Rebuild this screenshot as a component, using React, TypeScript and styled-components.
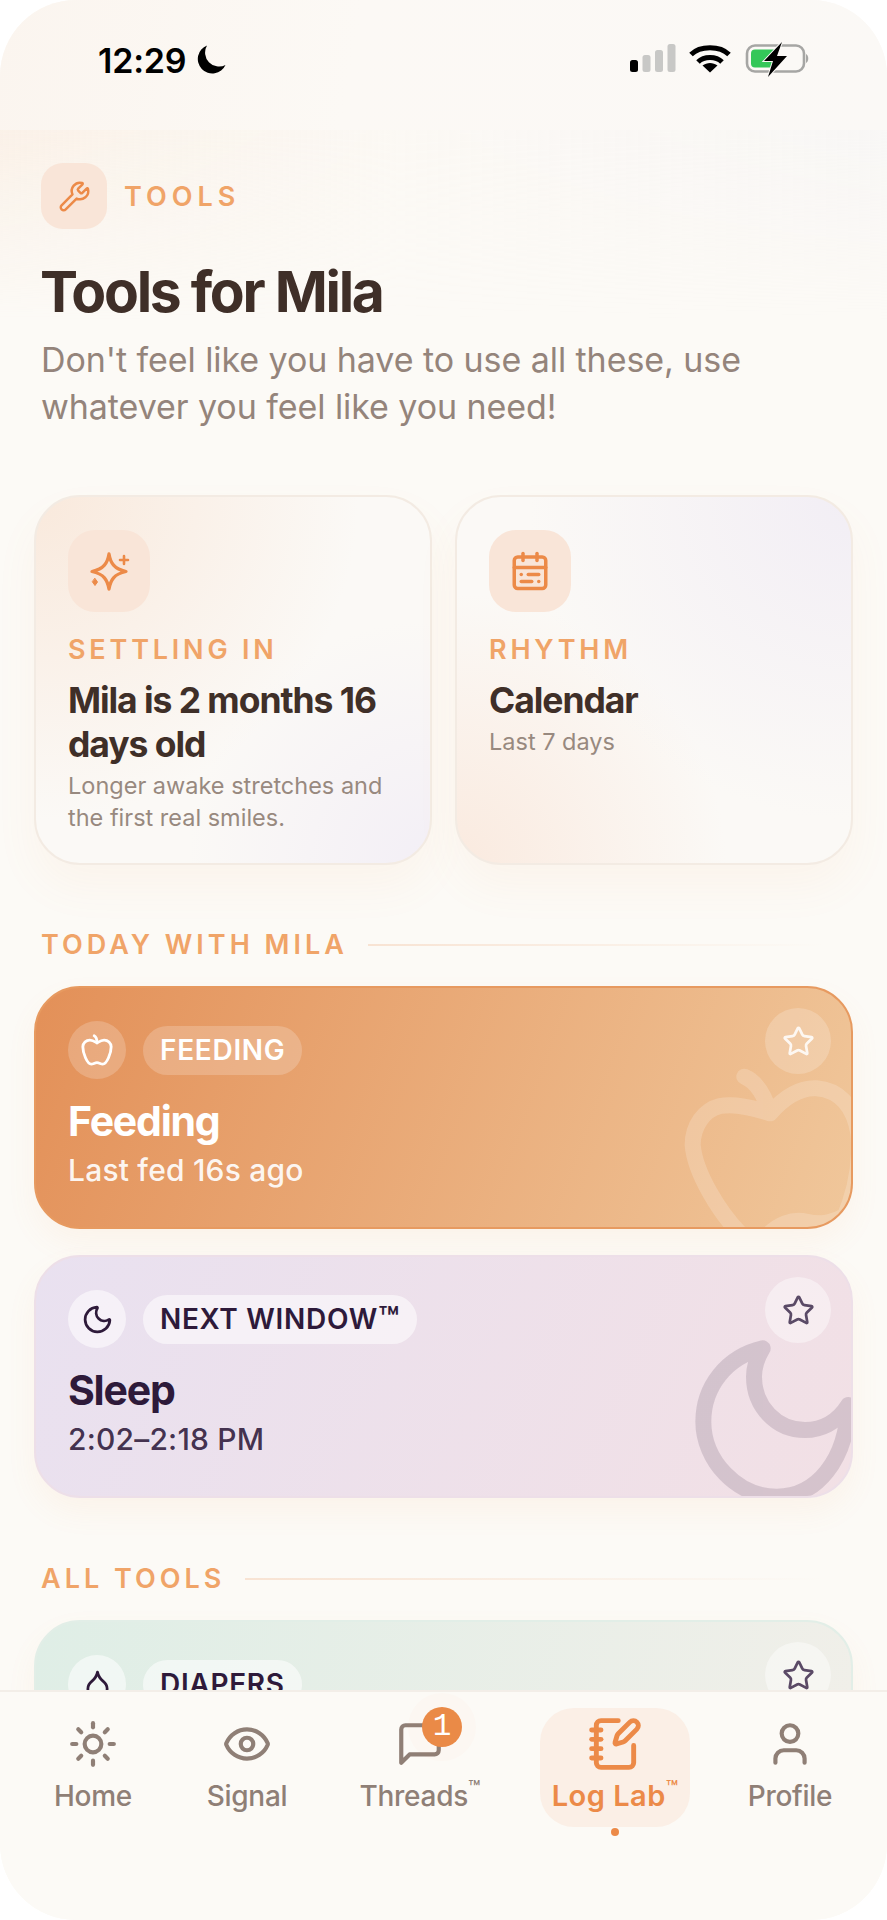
import React from "react";
import styled, { createGlobalStyle } from "styled-components";
import { Wrench, CalendarRange, Moon, Star, Droplet, Sun, Eye, NotebookPen, User } from "lucide-react";

const Global = createGlobalStyle`
  html, body { margin: 0; padding: 0; background: #fff; }
  * { box-sizing: border-box; }
  body { font-family: Inter, "Noto Sans", "Liberation Sans", sans-serif; }
`;

const Phone = styled.div`
  width: 887px; height: 1920px; border-radius: 76px; overflow: hidden;
  background: #fcfaf6; display: flex; flex-direction: column; position: relative;
`;
const StatusBar = styled.div`
  height: 130px; flex: none; padding: 41px 75px 0 98px; display: flex; justify-content: space-between; align-items: flex-start;
  background: linear-gradient(100deg, #fbf5ef, #fcf9f5 40%, #fbf9f6);
`;
const TimeWrap = styled.div`display: flex; align-items: center; gap: 10px; height: 38px;`;
const Time = styled.span`font-size: 34px; font-weight: 600; color: #000; letter-spacing: -0.2px;`;
const Main = styled.main`
  flex: 1; min-height: 0; overflow: hidden; position: relative; padding: 33px 34px 0;
  &::before {
    content: ""; position: absolute; left: 0; right: 0; top: 0; height: 190px; pointer-events: none;
    background: linear-gradient(90deg, rgba(248,225,205,.34), rgba(250,240,230,.08) 45%, rgba(240,238,245,.25));
    -webkit-mask-image: linear-gradient(to bottom, #000, transparent);
    mask-image: linear-gradient(to bottom, #000, transparent);
  }
`;
const Eyebrow = styled.div`position: relative; display: flex; align-items: center; gap: 17px; padding-left: 7px;`;
const Tile = styled.div<{ $size: number }>`
  width: ${p => p.$size}px; height: ${p => p.$size}px; border-radius: ${p => p.$size * 0.33}px; flex: none;
  background: #f9e5d8; color: #ec8a48; display: flex; align-items: center; justify-content: center;
`;
const EyebrowText = styled.span`font-size: 27px; font-weight: 600; letter-spacing: 5px; color: #f0a468;`;
const Title = styled.h1`
  position: relative; margin: 29px 0 0 6px; font-size: 57px; line-height: 68px; font-weight: 700; letter-spacing: -0.04em; color: #3f2f28;
`;
const Subtitle = styled.p`
  position: relative; margin: 10px 0 0 7px; font-size: 34px; line-height: 47px; font-weight: 400; letter-spacing: -0.002em; color: #94847b;
`;
const TopGrid = styled.div`display: grid; grid-template-columns: 398px 398px; gap: 23px; margin-top: 65px; position: relative;`;
const InfoCard = styled.div<{ $bg: string }>`
  height: 370px; border-radius: 46px; padding: 33px 32px; border: 2px solid #f3ebe3; background: ${p => p.$bg};
  box-shadow: 0 22px 44px rgba(236,150,90,.06);
`;
const CardLabel = styled.div`margin-top: 23px; font-size: 27px; line-height: 30px; font-weight: 600; letter-spacing: 3.8px; color: #f0a468;`;
const CardTitle = styled.div`margin-top: 14px; font-size: 35.5px; line-height: 44px; font-weight: 700; letter-spacing: -0.03em; color: #3f2f28;`;
const CardDesc = styled.div`margin-top: 3px; font-size: 23.5px; line-height: 32px; letter-spacing: 0; color: #98897f;`;
const SectionHead = styled.div<{ $top: number }>`display: flex; align-items: center; gap: 20px; margin: ${p => p.$top}px 0 0 7px;`;
const SectionText = styled.span`font-size: 27px; line-height: 30px; font-weight: 600; letter-spacing: 4px; color: #f0a468; white-space: nowrap;`;
const SectionRule = styled.div`flex: 1; height: 2px; margin-right: 30px; background: linear-gradient(90deg, #f8e3d3, rgba(248,227,211,0));`;
const ToolCard = styled.div<{ $bg: string; $border: string; $top: number }>`
  position: relative; overflow: hidden; height: 243px; margin-top: ${p => p.$top}px; border-radius: 46px;
  border: 2px solid ${p => p.$border}; background: ${p => p.$bg}; padding: 33px 32px;
  box-shadow: 0 14px 30px rgba(236,150,90,.07);
`;
const ToolTop = styled.div`display: flex; align-items: center; gap: 17px;`;
const IconCircle = styled.div<{ $light: boolean }>`
  width: 58px; height: 58px; border-radius: 50%; display: flex; align-items: center; justify-content: center;
  background: ${p => (p.$light ? "rgba(255,255,255,.2)" : "rgba(255,255,255,.55)")};
  color: ${p => (p.$light ? "#fff" : "#2e1a3a")};
`;
const Pill = styled.div<{ $light: boolean }>`
  height: 49px; padding: 0 17px; border-radius: 25px; display: flex; align-items: center;
  font-size: 28px; font-weight: 600; letter-spacing: 0.7px;
  background: ${p => (p.$light ? "rgba(255,255,255,.2)" : "rgba(255,255,255,.55)")};
  color: ${p => (p.$light ? "#fff" : "#2e1a3a")};
`;
const PillMark = styled.span`font-size: 34px; line-height: 1;`;
const ToolName = styled.div<{ $light: boolean }>`
  margin-top: 17px; font-size: 41px; line-height: 50px; font-weight: 700; letter-spacing: -0.03em; color: ${p => (p.$light ? "#fff" : "#2e1a3a")};
`;
const ToolSub = styled.div<{ $light: boolean }>`
  margin-top: 5px; font-size: 30px; line-height: 38px; font-weight: 500; letter-spacing: 0.2px;
  color: ${p => (p.$light ? "rgba(255,255,255,.92)" : "rgba(46,26,58,.9)")};
`;
const StarBtn = styled.div<{ $light: boolean }>`
  position: absolute; top: 20px; right: 20px; width: 66px; height: 66px; border-radius: 50%;
  display: flex; align-items: center; justify-content: center;
  background: ${p => (p.$light ? "rgba(255,255,255,.2)" : "rgba(255,255,255,.42)")};
  color: ${p => (p.$light ? "rgba(255,255,255,.85)" : "#5a4a66")};
`;
const Watermark = styled.svg<{ $w: number; $h: number; $stroke: string; $alpha: number }>`
  position: absolute; bottom: -2px; right: -2px; width: ${p => p.$w}px; height: ${p => p.$h}px; opacity: ${p => p.$alpha};
  fill: none; stroke: ${p => p.$stroke}; stroke-width: 48; stroke-linecap: round; stroke-linejoin: round;
`;
const SmallApple = styled.svg`
  width: 34px; height: 34px; fill: none; stroke: currentColor; stroke-width: 2; stroke-linecap: round; stroke-linejoin: round;
`;
const SparkIcon = styled.svg`
  width: 42px; height: 42px; fill: none; stroke: currentColor; stroke-width: 3.3; stroke-linecap: round; stroke-linejoin: round;
`;
const Nav = styled.nav`
  position: relative; flex: none; height: 230px; border-top: 2px solid #f3eee8; background: #fcfaf6;
  display: flex; align-items: flex-start; padding: 16px 0 0 0;
`;
const NavItem = styled.div<{ $active?: boolean; $w: number; $left: number }>`
  position: relative; width: ${p => p.$w}px; margin-left: ${p => p.$left}px; flex: none; height: 119px; border-radius: 34px; padding-top: 11px;
  display: flex; flex-direction: column; align-items: center;
  background: ${p => (p.$active ? "#fbefe6" : "transparent")};
  color: ${p => (p.$active ? "#ec8a48" : "#8f7f76")};
`;
const NavLabel = styled.div<{ $active?: boolean }>`
  margin-top: 9px; font-size: ${p => (p.$active ? 29 : 28)}px; line-height: 36px; font-weight: ${p => (p.$active ? 600 : 500)};
  letter-spacing: ${p => (p.$active ? "0.5px" : "-0.01em")}; white-space: nowrap;
`;
const Tm = styled.sup`
  font-size: 20px; line-height: 0; font-weight: 500; letter-spacing: 0; vertical-align: 11px; margin-left: 0;
`;
const Badge = styled.div`
  position: absolute; top: -1px; left: 70px; width: 40px; height: 40px; border-radius: 50%;
  background: #ea8a47; color: #fff; font-family: "Liberation Mono", monospace; font-size: 31px; line-height: 40px; text-align: center;
  box-shadow: 0 0 0 14px rgba(234,138,71,.025);
`;
const Dot = styled.div`
  position: absolute; left: 50%; bottom: -9px; margin-left: -4px; width: 8px; height: 8px; border-radius: 50%; background: #ec8a48;
`;
const StatusIcons = styled.div`display: flex; align-items: center; height: 38px;`;
const BubbleIcon = styled.svg`
  width: 50px; height: 50px; fill: none; stroke: currentColor; stroke-width: 2; stroke-linecap: round; stroke-linejoin: round;
`;

const AppleShape = () => (
  <>
    <path d="M12 20.94c1.5 0 2.75 1.06 4 1.06 3 0 6-8 6-12.22A4.91 4.91 0 0 0 17 5c-2.22 0-4 1.44-5 2-1-.56-2.78-2-5-2a4.9 4.9 0 0 0-5 4.78C2 14 5 22 8 22c1.25 0 2.5-1.06 4-1.06Z" />
    <path d="M10 2c1 .5 2 2 2 5" />
  </>
);

const StatusGlyphs = () => (
  <svg width="182" height="36" viewBox="0 0 182 36">
    <rect x="0" y="18" width="8" height="12" rx="2.5" fill="#000" />
    <rect x="12.5" y="13" width="8" height="17" rx="2.5" fill="#c8c8c6" />
    <rect x="25" y="8" width="8" height="22" rx="2.5" fill="#c8c8c6" />
    <rect x="37.5" y="2" width="8" height="28" rx="2.5" fill="#c8c8c6" />
    <g fill="none" stroke="#000" strokeWidth="5">
      <path d="M61 12.5 C70 3.5 90 3.5 99 12.5" />
      <path d="M68 20 C74 14 86 14 92 20" />
    </g>
    <path d="M80 30.5 L72.5 23.5 C77 20 83 20 87.5 23.5 Z" fill="#000" />
    <rect x="117" y="3.5" width="57" height="26" rx="8" fill="#fbf9f6" stroke="#a6a6a4" strokeWidth="2.6" />
    <rect x="121" y="7.5" width="26" height="18" rx="4" fill="#34c759" />
    <path d="M176 12 c3 1 3 8 0 9 Z" fill="#a6a6a4" />
    <path d="M152 0 L134 19 L143 19 L138 35 L157 14 L147 14 Z" fill="#000" stroke="#fbf9f6" strokeWidth="2" paintOrder="stroke" />
  </svg>
);

const App = () => (
  <>
    <Global />
    <Phone>
      <StatusBar>
        <TimeWrap>
          <Time>12:29</Time>
          <svg width="30" height="30" viewBox="0 0 30 30">
            <path d="M11 0.5 A14.5 14.5 0 1 0 29.5 20 A14 14 0 0 1 11 0.5 Z" fill="#000" />
          </svg>
        </TimeWrap>
        <StatusIcons>
          <StatusGlyphs />
        </StatusIcons>
      </StatusBar>
      <Main>
        <Eyebrow>
          <Tile $size={66}><Wrench size={33} strokeWidth={1.8} /></Tile>
          <EyebrowText>TOOLS</EyebrowText>
        </Eyebrow>
        <Title>Tools for Mila</Title>
        <Subtitle>Don't feel like you have to use all these, use<br />whatever you feel like you need!</Subtitle>
        <TopGrid>
          <InfoCard $bg="radial-gradient(circle at 0% 0%, #f9e9dc 0, rgba(249,233,220,0) 60%), radial-gradient(circle at 100% 100%, #f3eff6 0, rgba(243,239,246,0) 45%), #fbf9f6">
            <Tile $size={82}>
              <SparkIcon viewBox="0 0 42 42">
                <path d="M21 4 C22.5 13 26 19 38 21.5 C26 24 22.5 30 21 39 C19.5 30 16 24 4 21.5 C16 19 19.5 13 21 4 Z" />
                <path d="M36 6v8 M32 10h8" strokeWidth="2.6" />
                <path d="M7 28.5 L9.5 32 L7 35.5 L4.5 32 Z" fill="currentColor" strokeWidth="1" />
              </SparkIcon>
            </Tile>
            <CardLabel>SETTLING IN</CardLabel>
            <CardTitle>Mila is 2 months 16 days old</CardTitle>
            <CardDesc>Longer awake stretches and the first real smiles.</CardDesc>
          </InfoCard>
          <InfoCard $bg="radial-gradient(circle at 100% 0%, #f2eef5 0, rgba(242,238,245,0) 60%), radial-gradient(circle at 0% 100%, #faeadf 0, rgba(250,234,223,0) 50%), #fbf9f6">
            <Tile $size={82}><CalendarRange size={42} strokeWidth={2} /></Tile>
            <CardLabel>RHYTHM</CardLabel>
            <CardTitle>Calendar</CardTitle>
            <CardDesc>Last 7 days</CardDesc>
          </InfoCard>
        </TopGrid>
        <SectionHead $top={65}>
          <SectionText>TODAY WITH MILA</SectionText>
          <SectionRule />
        </SectionHead>
        <ToolCard $top={26} $bg="linear-gradient(110deg, #e39058, #f0c79b)" $border="#e79a60">
          <Watermark $w={213} $h={229} $stroke="#fff" $alpha={0.18} viewBox="0 0 639 687">
            <path d="M313 230 C350 245 375 290 390 340 M390 340 C330 320 280 310 240 318 C190 330 158 380 158 435 C165 520 240 640 300 700 M390 340 C430 295 480 262 530 265 C590 270 640 310 655 400 C665 500 640 590 610 660 M370 720 C410 670 460 655 500 665 C540 675 570 670 610 650" />
          </Watermark>
          <ToolTop>
            <IconCircle $light><SmallApple viewBox="0 0 24 24"><AppleShape /></SmallApple></IconCircle>
            <Pill $light>FEEDING</Pill>
          </ToolTop>
          <ToolName $light>Feeding</ToolName>
          <ToolSub $light>Last fed 16s ago</ToolSub>
          <StarBtn $light><Star size={33} strokeWidth={2} /></StarBtn>
        </ToolCard>
        <ToolCard $top={26} $bg="linear-gradient(115deg, #e9e1f0, #f2e0e5)" $border="#eddfe8">
          <Watermark $w={213} $h={242} $stroke="#2e1a3a" $alpha={0.14} viewBox="0 768 639 726">
            <path d="M368 1045 C260 1070 190 1160 190 1265 C190 1380 290 1490 410 1490 C530 1490 620 1380 625 1215 C590 1270 540 1290 495 1290 C410 1290 342 1220 342 1130 C342 1100 350 1075 368 1045 Z" />
          </Watermark>
          <ToolTop>
            <IconCircle $light={false}><Moon size={33} strokeWidth={2} /></IconCircle>
            <Pill $light={false}>NEXT WINDOW<PillMark>™</PillMark></Pill>
          </ToolTop>
          <ToolName $light={false}>Sleep</ToolName>
          <ToolSub $light={false}>2:02–2:18 PM</ToolSub>
          <StarBtn $light={false}><Star size={33} strokeWidth={2} /></StarBtn>
        </ToolCard>
        <SectionHead $top={66}>
          <SectionText>ALL TOOLS</SectionText>
          <SectionRule />
        </SectionHead>
        <ToolCard $top={26} $bg="linear-gradient(105deg, #dfeee6, #f1efe9)" $border="#e2eee7">
          <ToolTop>
            <IconCircle $light={false}><Droplet size={33} strokeWidth={2} /></IconCircle>
            <Pill $light={false}>DIAPERS</Pill>
          </ToolTop>
          <StarBtn $light={false}><Star size={33} strokeWidth={2} /></StarBtn>
        </ToolCard>
      </Main>
      <Nav>
        <NavItem $w={112} $left={37}><Sun size={50} strokeWidth={2} /><NavLabel>Home</NavLabel></NavItem>
        <NavItem $w={112} $left={42}><Eye size={50} strokeWidth={2} /><NavLabel>Signal</NavLabel></NavItem>
        <NavItem $w={136} $left={49}>
          <BubbleIcon viewBox="0 0 24 24"><path d="M21 15a2 2 0 0 1-2 2H7l-4 4V5a2 2 0 0 1 2-2h14a2 2 0 0 1 2 2z" /></BubbleIcon>
          <Badge>1</Badge>
          <NavLabel>Threads<Tm>™</Tm></NavLabel>
        </NavItem>
        <NavItem $w={150} $left={52} $active>
          <NotebookPen size={56} strokeWidth={2.1} style={{ marginTop: -3, marginBottom: -3 }} />
          <NavLabel $active>Log Lab<Tm>™</Tm></NavLabel>
          <Dot />
        </NavItem>
        <NavItem $w={116} $left={42}><User size={50} strokeWidth={2} /><NavLabel>Profile</NavLabel></NavItem>
      </Nav>
    </Phone>
  </>
);

export default App;
